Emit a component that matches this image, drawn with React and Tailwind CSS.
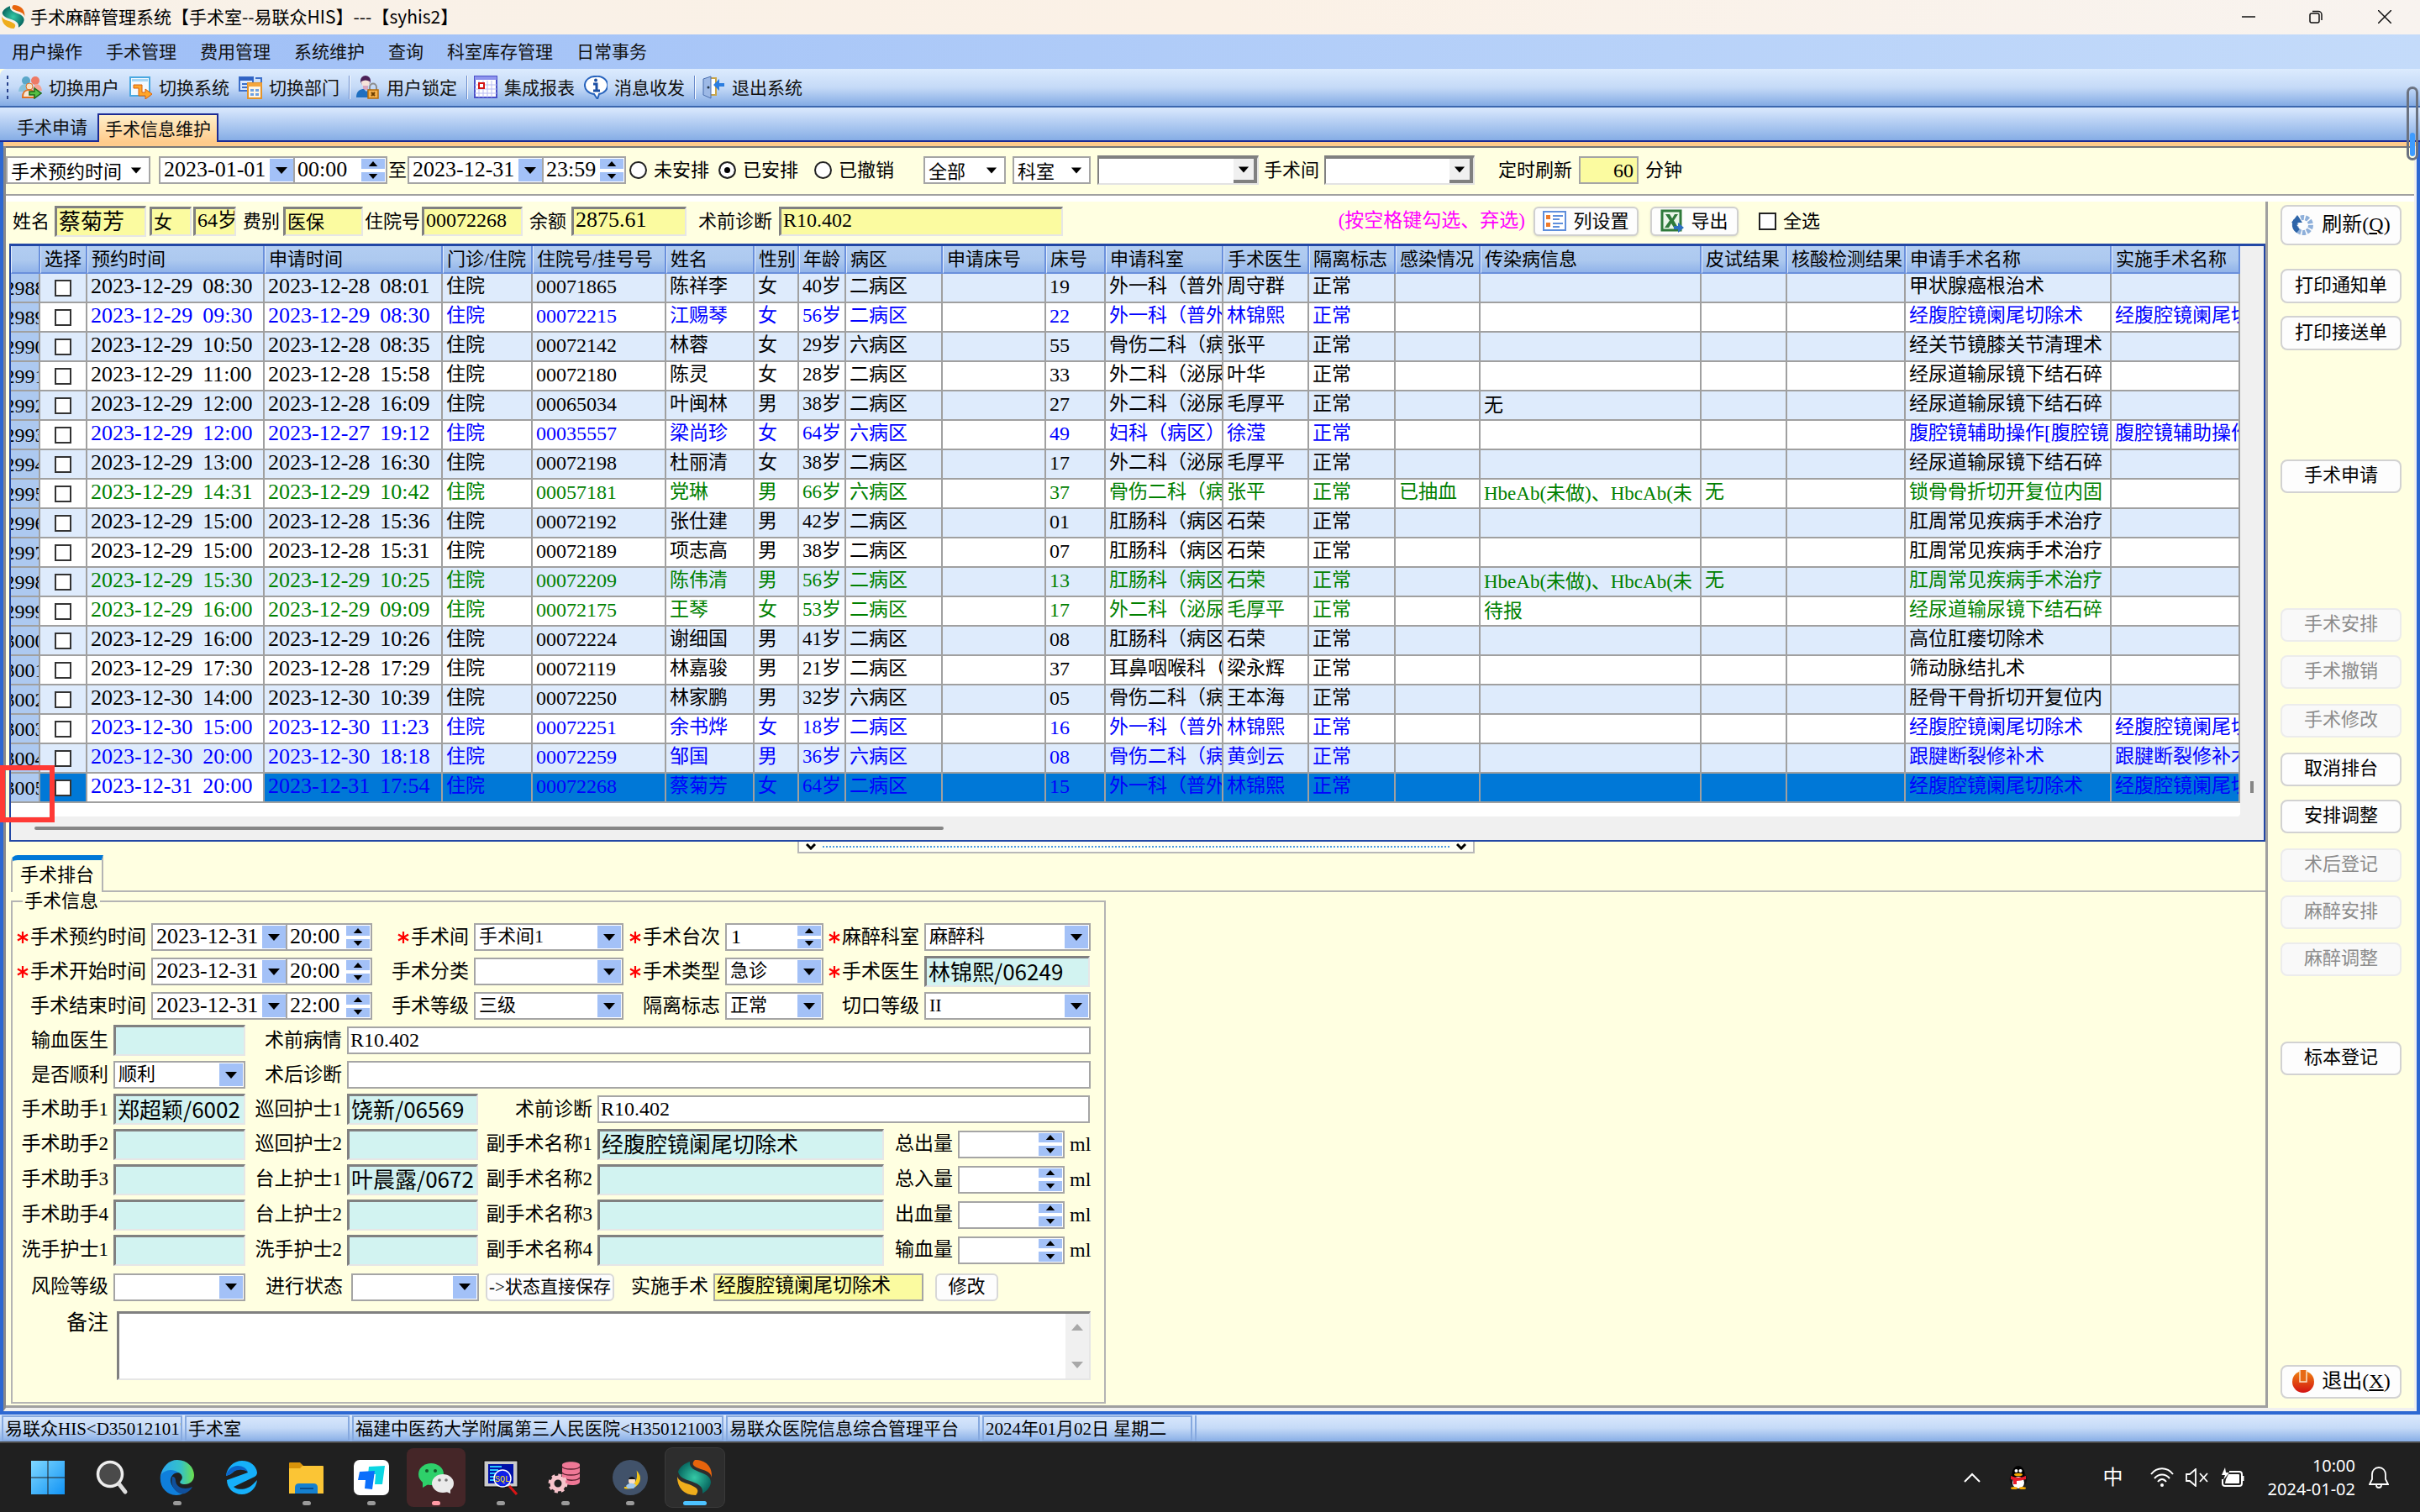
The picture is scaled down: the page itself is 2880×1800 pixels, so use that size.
import React from 'react';

const CJK = "font-['Noto_Sans_CJK_SC',sans-serif]";
const SONG = "font-['Liberation_Serif','Noto_Sans_CJK_SC',serif]";

/* ---------- shared controls ---------- */

function Down({ className = 'w-4 h-2.5' }) {
  return (
    <svg viewBox="0 0 16 10" className={className} aria-hidden="true">
      <path d="M1 1h14L8 9z" fill="currentColor" />
    </svg>
  );
}

function Up({ className = 'w-3 h-2' }) {
  return (
    <svg viewBox="0 0 16 10" className={className} aria-hidden="true">
      <path d="M1 9h14L8 1z" fill="currentColor" />
    </svg>
  );
}

function Spin({ name }) {
  return (
    <span className="flex w-7 shrink-0 flex-col gap-1">
      <button aria-label={name + '增加'} className="flex flex-1 items-center justify-center bg-[#a3c1f7]">
        <Up />
      </button>
      <button aria-label={name + '减少'} className="flex flex-1 items-center justify-center bg-[#a3c1f7]">
        <Down className="w-3 h-2" />
      </button>
    </span>
  );
}

function DateTime({ id, name, date, time, timeWidth }) {
  return (
    <div className="flex h-[33px] shrink-0 border-2 border-[#a5a5a5] bg-white">
      <input id={id} aria-label={name + '日期'} defaultValue={date} className={`w-[130px] pb-0.5 pl-1 text-[26px] ${SONG}`} />
      <button aria-label={name + '日历'} className="my-px flex w-7 items-center justify-center bg-[#a3c1f7]">
        <Down />
      </button>
      <span className={`flex border-l-2 border-[#a5a5a5] p-px ${timeWidth}`}>
        <input aria-label={name + '时间'} defaultValue={time} className={`min-w-0 flex-1 pb-0.5 pl-0.5 text-[26px] ${SONG}`} />
        <Spin name={name} />
      </span>
    </div>
  );
}

function Combo({ id, label, value, width, blue }) {
  return (
    <div className={`relative h-[33px] shrink-0 border-2 border-[#a5a5a5] bg-white ${width}`}>
      <select id={id} aria-label={label} className={`h-full w-full appearance-none pb-0.5 pl-1 text-[22px] leading-7 ${SONG}`}>
        <option>{value}</option>
      </select>
      <span
        className={`pointer-events-none absolute inset-y-px right-px flex w-7 items-center justify-center ${
          blue ? 'bg-[#a3c1f7]' : ''
        }`}
      >
        <Down className={blue ? 'w-4 h-2.5' : 'w-3.5 h-2.5'} />
      </span>
    </div>
  );
}

function SunkenCombo({ id, label, width }) {
  return (
    <div className={`relative h-[35px] shrink-0 border-2 border-t-4 border-[#e3e3e3] border-t-[#808080] border-l-[#808080] bg-white ${width}`}>
      <select id={id} aria-label={label} className="h-full w-full appearance-none">
        <option> </option>
      </select>
      <span className="pointer-events-none absolute inset-y-0 right-0 flex w-7 items-center justify-center border-b-4 border-r-4 border-[#808080] bg-[#f0f0f0]">
        <Down className="w-3.5 h-3" />
      </span>
    </div>
  );
}

function Field({ id, label, value, tone = 'bg-[#d2f3f1]', width, font = CJK, size = 'text-[26px]', height = 'h-[37px]' }) {
  return (
    <input
      id={id}
      aria-label={label}
      defaultValue={value}
      className={`border-2 border-[#e6e6e6] border-t-[3px] border-t-[#808080] border-l-[3px] border-l-[#808080] pb-1 pl-0.5 ${tone} ${width} ${font} ${size} ${height}`}
    />
  );
}

function Flat({ id, value, width, tone = 'bg-white', size = 'text-[24px]' }) {
  return (
    <input id={id} defaultValue={value} className={`h-[33px] border-2 border-[#a5a5a5] pb-0.5 pl-0.5 ${tone} ${width} ${size} ${SONG}`} />
  );
}

function SpinField({ id, name, value, width }) {
  return (
    <div className={`flex h-[33px] shrink-0 border-2 border-[#a5a5a5] bg-white p-px ${width}`}>
      <input id={id} defaultValue={value} className={`min-w-0 flex-1 pb-0.5 pl-1 text-[24px] ${SONG}`} />
      <Spin name={name} />
    </div>
  );
}

function Label({ htmlFor, children, width, star }) {
  return (
    <label htmlFor={htmlFor} className={`flex shrink-0 items-center justify-end gap-0.5 pr-1.5 text-[23px] leading-8 whitespace-nowrap ${width} ${SONG}`}>
      {star && (
        <svg viewBox="0 0 14 16" className="h-4 w-3.5" aria-hidden="true">
          <path d="M7 1v14M1 4.5l12 7M13 4.5l-12 7" stroke="#ff0000" strokeWidth="2.2" />
        </svg>
      )}
      {children}
    </label>
  );
}

/* ---------- icons ---------- */

function Swirl({ className }) {
  return (
    <svg viewBox="0 0 42 42" className={className} aria-hidden="true">
      <defs>
        <radialGradient id="swirlGreen" cx="0.5" cy="0.5" r="0.55">
          <stop offset="0" stopColor="#35c9a6" />
          <stop offset="1" stopColor="#06645e" />
        </radialGradient>
      </defs>
      <path d="M21 0C34 0 42 8 41 21 40 15 35 13 28 11 19 8 16 5 21 0z" fill="#e8640c" />
      <path d="M15 2c-1 8 6 10 13 13 9 3 12 7 12 12-1 6-5 10-10 13 1-8-4-11-12-14C8 23 2 20 1 14 3 8 9 4 15 2z" fill="url(#swirlGreen)" />
      <path d="M0 20c2 5 7 7 14 9 10 4 13 7 8 13C8 42 0 33 0 20z" fill="#efad1c" />
    </svg>
  );
}

const Ico = ({ children }) => (
  <svg viewBox="0 0 28 28" className="h-7 w-7 shrink-0" aria-hidden="true">
    {children}
  </svg>
);

const toolIcons = {
  users: (
    <Ico>
      <circle cx="9" cy="6" r="5" fill="#5ba7c9" />
      <circle cx="20" cy="6" r="5" fill="#ee7a66" />
      <path d="M0 19c1-8 5-9 9-9l4 9z" fill="#86c1db" />
      <path d="M28 18c-1-7-4-8-8-8l-4 8z" fill="#f4a394" />
      <circle cx="13" cy="13" r="4" fill="#fbe2c4" stroke="#e07020" />
      <path d="M5 26c0-8 4-9 8-9s6 3 6 9z" fill="#f6e7d8" stroke="#e07020" strokeWidth="2" />
      <path d="M13 19h6v-4l8 6-8 6v-4h-6z" fill="#57c043" stroke="#1f6b1a" strokeWidth="1.500" />
    </Ico>
  ),
  system: (
    <Ico>
      <path d="M2 2h23v22H2z" fill="#f2f9ff" stroke="#4aa8e0" strokeWidth="2" />
      <path d="M4 4h19v3H4z" fill="#a7d6f5" />
      <path d="M6 11h10v9h4v-4l8 6-8 6v-4h-8v-9H6z" fill="#ffa62b" stroke="#d9600d" />
    </Ico>
  ),
  dept: (
    <Ico>
      <path d="M1 2h16v16H1z" fill="#d9e8ff" stroke="#3c6fc9" strokeWidth="2" />
      <path d="M1 2h16v4H1z" fill="#2f62c4" />
      <path d="M4 10h8M4 14h8" stroke="#3c6fc9" strokeWidth="2" />
      <path d="M20 3h7v5" fill="none" stroke="#3c6fc9" strokeWidth="2" />
      <path d="M11 9h16v18H11z" fill="#fff6e6" stroke="#e2942c" strokeWidth="2" />
      <path d="M11 9h16v4H11z" fill="#f4a63e" />
      <path d="M14 16h4v3h-4zM20 16h4v3h-4zM14 21h4v3h-4zM20 21h4v3h-4z" fill="#6ea2e5" />
    </Ico>
  ),
  lock: (
    <Ico>
      <circle cx="11" cy="6" r="6" fill="#4a1f57" />
      <path d="M6 7q5-3 10 0c0 9-10 9-10 0z" fill="#f7e3da" />
      <path d="M8 12h6v5H8z" fill="#d9a7c0" />
      <path d="M0 26c0-8 5-10 9-10l3 3 3-3c4 0 6 4 6 10z" fill="#1f6fc0" />
      <path d="M16 17v-3c0-6 8-6 8 0v3" fill="none" stroke="#8c8c8c" strokeWidth="2" />
      <path d="M14 17h12v10H14z" fill="#f5b04b" stroke="#b76c0a" strokeWidth="1.500" />
      <path d="M18 20l4 4M22 20l-4 4" stroke="#6b3d00" strokeWidth="2" />
    </Ico>
  ),
  report: (
    <Ico>
      <path d="M1 1h26v25H1z" fill="#fff" stroke="#4a50c8" strokeWidth="2" />
      <path d="M1 1h26v4H1z" fill="#8d93ee" />
      <path d="M6 6v20M11 6v20M16 6v20M21 6v20M1 11h26M1 16h26M1 21h26" stroke="#b9bcf3" />
      <path d="M6 9h6v6H6z" fill="#fff" stroke="#d41414" strokeWidth="2" />
    </Ico>
  ),
  message: (
    <Ico>
      <path d="M14 1a12 10.500 0 0 1 4 21l-2 6-4-6A12 10.500 0 0 1 14 1z" fill="#fff" stroke="#2763bd" strokeWidth="2" />
      <path d="M11 10h4v8M11 18h8" fill="none" stroke="#1c4fa3" strokeWidth="3" />
      <circle cx="14" cy="5.500" r="2" fill="#1c4fa3" />
    </Ico>
  ),
  exit: (
    <Ico>
      <path d="M9 3h8v20H9z" fill="#fff" stroke="#c9a54a" strokeWidth="2" />
      <path d="M2 4l9-3v26l-9-4z" fill="#9db9e6" stroke="#4b6fae" />
      <circle cx="8" cy="14" r="1.500" fill="#234" />
      <path d="M27 9h-6V4l-7 7 7 7v-5h6z" fill="#2b7de0" />
    </Ico>
  ),
};

/* ---------- data ---------- */

const columns = [
  ['', 'w-[35px]'],
  ['选择', 'w-[56px]'],
  ['预约时间', 'w-[211px]'],
  ['申请时间', 'w-[212px]'],
  ['门诊/住院', 'w-[107px]'],
  ['住院号/挂号号', 'w-[159px]'],
  ['姓名', 'w-[105px]'],
  ['性别', 'w-[53px]'],
  ['年龄', 'w-[56px]'],
  ['病区', 'w-[115px]'],
  ['申请床号', 'w-[123px]'],
  ['床号', 'w-[71px]'],
  ['申请科室', 'w-[140px]'],
  ['手术医生', 'w-[102px]'],
  ['隔离标志', 'w-[103px]'],
  ['感染情况', 'w-[101px]'],
  ['传染病信息', 'w-[263px]'],
  ['皮试结果', 'w-[102px]'],
  ['核酸检测结果', 'w-[141px]'],
  ['申请手术名称', 'w-[245px]'],
  ['实施手术名称', ''],
];

const HB = 'HbeAb(未做)、HbcAb(未';
const LWCQ = '经腹腔镜阑尾切除术';
const JND = '经尿道输尿镜下结石碎';

// color, 预约, 申请, 住院号, 姓名, 性别, 年龄, 病区, 床号, 科室, 医生, 感染, 传染病, 皮试, 申请手术, 实施手术
const rows = [
  ['k', '29 08:30', '28 08:01', '00071865', '陈祥李', '女', 40, '二', '19', '外一科（普外', '周守群', '', '', '', '甲状腺癌根治术', ''],
  ['b', '29 09:30', '29 08:30', '00072215', '江赐琴', '女', 56, '二', '22', '外一科（普外', '林锦熙', '', '', '', LWCQ, LWCQ],
  ['k', '29 10:50', '28 08:35', '00072142', '林蓉', '女', 29, '六', '55', '骨伤二科（病', '张平', '', '', '', '经关节镜膝关节清理术', ''],
  ['k', '29 11:00', '28 15:58', '00072180', '陈灵', '女', 28, '二', '33', '外二科（泌尿', '叶华', '', '', '', JND, ''],
  ['k', '29 12:00', '28 16:09', '00065034', '叶闽林', '男', 38, '二', '27', '外二科（泌尿', '毛厚平', '', '无', '', JND, ''],
  ['b', '29 12:00', '27 19:12', '00035557', '梁尚珍', '女', 64, '六', '49', '妇科（病区）', '徐滢', '', '', '', '腹腔镜辅助操作[腹腔镜', '腹腔镜辅助操作'],
  ['k', '29 13:00', '28 16:30', '00072198', '杜丽清', '女', 38, '二', '17', '外二科（泌尿', '毛厚平', '', '', '', JND, ''],
  ['g', '29 14:31', '29 10:42', '00057181', '党琳', '男', 66, '六', '37', '骨伤二科（病', '张平', '已抽血', HB, '无', '锁骨骨折切开复位内固', ''],
  ['k', '29 15:00', '28 15:36', '00072192', '张仕建', '男', 42, '二', '01', '肛肠科（病区', '石荣', '', '', '', '肛周常见疾病手术治疗', ''],
  ['k', '29 15:00', '28 15:31', '00072189', '项志高', '男', 38, '二', '07', '肛肠科（病区', '石荣', '', '', '', '肛周常见疾病手术治疗', ''],
  ['g', '29 15:30', '29 10:25', '00072209', '陈伟清', '男', 56, '二', '13', '肛肠科（病区', '石荣', '', HB, '无', '肛周常见疾病手术治疗', ''],
  ['g', '29 16:00', '29 09:09', '00072175', '王琴', '女', 53, '二', '17', '外二科（泌尿', '毛厚平', '', '待报', '', JND, ''],
  ['k', '29 16:00', '29 10:26', '00072224', '谢细国', '男', 41, '二', '08', '肛肠科（病区', '石荣', '', '', '', '高位肛瘘切除术', ''],
  ['k', '29 17:30', '28 17:29', '00072119', '林嘉骏', '男', 21, '二', '37', '耳鼻咽喉科（', '梁永辉', '', '', '', '筛动脉结扎术', ''],
  ['k', '30 14:00', '30 10:39', '00072250', '林家鹏', '男', 32, '六', '05', '骨伤二科（病', '王本海', '', '', '', '胫骨干骨折切开复位内', ''],
  ['b', '30 15:00', '30 11:23', '00072251', '余书烨', '女', 18, '二', '16', '外一科（普外', '林锦熙', '', '', '', LWCQ, LWCQ],
  ['b', '30 20:00', '30 18:18', '00072259', '邹国', '男', 36, '六', '08', '骨伤二科（病', '黄剑云', '', '', '', '跟腱断裂修补术', '跟腱断裂修补术'],
  ['b', '31 20:00', '31 17:54', '00072268', '蔡菊芳', '女', 64, '二', '15', '外一科（普外', '林锦熙', '', '', '', LWCQ, LWCQ],
];

const inkClass = { k: 'text-black', b: 'text-[#0000ff]', g: 'text-[#008000]' };

function Stamp({ value }) {
  const [day, time] = value.split(' ');
  return (
    <span className="flex gap-3 text-[26px]">
      <span>2023-12-{day}</span>
      <span>{time}</span>
    </span>
  );
}

function Cell({ children, className = '' }) {
  return (
    <td className={`h-[35px] overflow-hidden border-r-2 border-b-2 border-[#a0a0a0] p-0 pl-1 leading-[30px] whitespace-nowrap ${className}`}>
      <div className="h-[33px] overflow-hidden">{children}</div>
    </td>
  );
}

function SurgeryTable() {
  return (
    <div className="ml-1 border-2 border-t-[3px] border-[#2247a5] bg-[#f0f0f0]">
      <div className="flex">
        <div className="min-w-0 flex-1 rounded-br-sm bg-white pb-4">
          <table className={`w-full table-fixed border-separate border-spacing-0 text-[23px] ${SONG}`}>
            <colgroup>
              {columns.map(([name, width], i) => (
                <col key={i} className={width} />
              ))}
            </colgroup>
            <thead>
              <tr className="bg-linear-to-b from-[#b2cdf2] via-[#adc9ef] to-[#8db0e8]">
                {columns.map(([name], i) => (
                  <th
                    key={i}
                    className="h-[33px] overflow-hidden border-r-2 border-b-2 border-l border-[#6a90dc] border-l-[#e4eefc] p-0 pl-1 text-left text-[22px] leading-7 font-normal whitespace-nowrap"
                  >
                    <div className="h-7 overflow-hidden">{name}</div>
                  </th>
                ))}
              </tr>
            </thead>
            <tbody>
              {rows.map((r, i) => {
                const sel = i === rows.length - 1;
                const [ink, plan, apply, no, name, sex, age, ward, bed, dept, doc, inf, dis, skin, op, done] = r;
                return (
                  <tr key={i} className={`${inkClass[ink]} ${sel ? 'bg-[#0078d7]' : i % 2 ? 'bg-white' : 'bg-[#deebfc]'}`}>
                    <td className="h-[35px] border-r-2 border-b-2 border-[#a0a0a0] bg-[#adc9f0] p-0 text-black">
                      <div className="flex h-[33px] items-center justify-center overflow-hidden text-[24px]">{2988 + i}</div>
                    </td>
                    <td className="border-r-2 border-b-2 border-[#a0a0a0] p-0">
                      <div className="flex items-center justify-center">
                        <input type="checkbox" aria-label={'选择 ' + name} className="h-5 w-5 appearance-none border-2 border-[#333] bg-white" />
                      </div>
                    </td>
                    <Cell className={sel ? 'bg-white' : ''}><Stamp value={plan} /></Cell>
                    <Cell><Stamp value={apply} /></Cell>
                    <Cell>住院</Cell>
                    <Cell className="text-[24px]">{no}</Cell>
                    <Cell>{name}</Cell>
                    <Cell>{sex}</Cell>
                    <Cell>{age}岁</Cell>
                    <Cell>{ward}病区</Cell>
                    <Cell />
                    <Cell className="text-[24px]">{bed}</Cell>
                    <Cell>{dept}</Cell>
                    <Cell>{doc}</Cell>
                    <Cell>正常</Cell>
                    <Cell>{inf}</Cell>
                    <Cell>{dis && <div className="pt-0.5">{dis}</div>}</Cell>
                    <Cell>{skin}</Cell>
                    <Cell />
                    <Cell>{op}</Cell>
                    <Cell>{done}</Cell>
                  </tr>
                );
              })}
            </tbody>
          </table>
        </div>
        <div className="flex w-7 items-end justify-center pb-7">
          <div className="h-3.5 w-1 bg-[#868686]" />
        </div>
      </div>
      <div className="flex h-7 items-center pl-7">
        <div className="h-1 w-[1082px] rounded-sm bg-[#868686]" />
      </div>
    </div>
  );
}

/* ---------- page sections ---------- */

function TitleBar() {
  return (
    <header className={`flex h-[41px] items-center bg-linear-to-r from-[#f8f1e8] via-[#fbf1e6] to-[#f8f3ef] pb-0.5 pl-0.5 text-[21px] text-black ${CJK}`}>
      <Swirl className="h-7 w-7" />
      <h1 className="ml-1.5">手术麻醉管理系统【手术室--易联众HIS】---【syhis2】</h1>
      <div className="ml-auto flex">
        <button aria-label="最小化" className="flex w-20 justify-center">
          <svg viewBox="0 0 16 16" className="h-4 w-4"><path d="M0 8h16" stroke="#111" strokeWidth="1.500" /></svg>
        </button>
        <button aria-label="还原" className="flex w-20 justify-center">
          <svg viewBox="0 0 16 16" className="h-4 w-4" fill="none" stroke="#111" strokeWidth="1.500">
            <rect x="1" y="4" width="11" height="11" rx="2" />
            <path d="M4 1.500h7a4 4 0 0 1 4 4V12" />
          </svg>
        </button>
        <button aria-label="关闭" className="flex w-[84px] justify-center">
          <svg viewBox="0 0 16 16" className="h-4 w-4"><path d="M0 0l16 16M16 0L0 16" stroke="#111" strokeWidth="1.500" /></svg>
        </button>
      </div>
    </header>
  );
}

function MenuBar() {
  return (
    <nav className={`flex h-[41px] items-center gap-7 bg-linear-to-r from-[#9ebef6] to-[#c4dbfa] pb-0.5 pl-3.5 text-[21px] text-[#111] ${CJK}`}>
      {['用户操作', '手术管理', '费用管理', '系统维护', '查询', '科室库存管理', '日常事务'].map((m) => (
        <button key={m}>{m}</button>
      ))}
    </nav>
  );
}

function ToolBar() {
  const items = [
    ['users', '切换用户'],
    ['system', '切换系统'],
    ['dept', '切换部门', true],
    ['lock', '用户锁定', true],
    ['report', '集成报表'],
    ['message', '消息收发', true],
    ['exit', '退出系统'],
  ];
  return (
    <div className={`flex h-[46px] items-center rounded-tl-lg border-b-2 border-[#3c67ae] bg-linear-to-b from-[#dcebfe] via-[#c5daf7] to-[#84abe4] pl-2 text-[21px] text-[#111] ${CJK}`}>
      <span className="mr-3 h-7 w-0.5 bg-[repeating-linear-gradient(#27418b_0_4px,transparent_4px_8px)]" />
      {items.map(([icon, text, sep]) => (
        <React.Fragment key={icon}>
          <button className="mr-[11px] flex items-center gap-2">
            {toolIcons[icon]}
            {text}
          </button>
          {sep && <span className="mr-[7px] h-7 w-0.5 border-r border-white bg-[#6a8ccb]" />}
        </React.Fragment>
      ))}
    </div>
  );
}

function TabStrip() {
  return (
    <div className={`flex h-[41px] items-end border-b-2 border-[#1c2a94] bg-linear-to-b from-[#dbe9fd] to-[#86ade5] pl-4 text-[21px] text-[#111] ${CJK}`}>
      <button className="mr-2 h-8 w-[92px]">手术申请</button>
      <button className="-mb-0.5 h-[34px] w-36 border-2 border-b-0 border-[#1c2a94] bg-linear-to-b from-[#ffefc9] to-[#ffcb8b] pb-1">手术信息维护</button>
    </div>
  );
}

function Radio({ id, text, checked }) {
  return (
    <span className="flex items-center gap-2">
      <input
        id={id}
        type="radio"
        name="state"
        defaultChecked={checked}
        className="h-[21px] w-[21px] appearance-none rounded-full border-2 border-[#222] bg-white checked:bg-black checked:shadow-[inset_0_0_0_5px_#fff]"
      />
      <label htmlFor={id} className="w-[69px] whitespace-nowrap">{text}</label>
    </span>
  );
}

function FilterRow() {
  return (
    <div className={`flex h-[57px] items-center border-b-2 border-[#a0a0a0] pb-0.5 text-[22px] whitespace-nowrap ${SONG}`}>
      <Combo label="时间类型" value="手术预约时间" width="w-[172px]" />
      <span className="w-2.5" />
      <DateTime name="开始" date="2023-01-01" time="00:00" timeWidth="w-[110px]" />
      <span className="w-6 text-center">至</span>
      <DateTime name="结束" date="2023-12-31" time="23:59" timeWidth="w-[98px]" />
      <div className="ml-1 flex gap-2">
        <Radio id="st0" text="未安排" />
        <Radio id="st1" text="已安排" checked />
        <span />
        <Radio id="st2" text="已撤销" />
      </div>
      <div className="ml-8 flex items-center gap-2">
        <Combo label="范围" value="全部" width="w-[98px]" />
        <Combo label="科室类型" value="科室" width="w-[93px]" />
        <SunkenCombo label="科室" width="w-[192px]" />
      </div>
      <label htmlFor="room" className="mx-1.5">手术间</label>
      <SunkenCombo id="room" width="w-[179px]" />
      <label htmlFor="refresh" className="mr-2 ml-7">定时刷新</label>
      <input
        id="refresh"
        defaultValue="60"
        className="h-[33px] w-[71px] border-2 border-[#a5a5a5] bg-[#fbfba0] pr-1 text-right text-[24px]"
      />
      <span className="ml-2">分钟</span>
    </div>
  );
}

function InfoRow() {
  const yellow = 'bg-[#fbfba0]';
  const small = { tone: yellow, font: SONG, height: 'h-[35px]' };
  return (
    <div className={`flex h-[50px] items-center pb-1 text-[22px] whitespace-nowrap ${SONG}`}>
      <label htmlFor="pname" className="w-[58px] pl-2">姓名</label>
      <Field id="pname" value="蔡菊芳" tone={yellow} width="w-[109px]" />
      <span className="ml-1 flex gap-0.5">
        <Field label="性别" value="女" {...small} size="text-[22px]" width="w-[50px]" />
        <Field label="年龄" value="64岁" {...small} size="text-[24px]" width="w-[51px]" />
      </span>
      <label htmlFor="fee" className="mr-1 ml-2">费别</label>
      <Field id="fee" value="医保" {...small} size="text-[22px]" width="w-[95px]" />
      <label htmlFor="pno" className="mx-0.5">住院号</label>
      <Field id="pno" value="00072268" {...small} size="text-[24px]" width="w-[120px]" />
      <label htmlFor="bal" className="mr-1.5 ml-2">余额</label>
      <Field id="bal" value="2875.61" {...small} size="text-[26px]" width="w-[137px]" />
      <label htmlFor="diag" className="mr-2 ml-3.5">术前诊断</label>
      <Field id="diag" value="R10.402" {...small} size="text-[24px]" width="w-[338px]" />
      <div className="mr-[530px] ml-auto flex items-center">
        <span className="mr-2.5 text-[23px] text-[#ff00ff]">(按空格键勾选、弃选)</span>
        <button className="flex h-[35px] w-[125px] items-center justify-center gap-2 rounded-md border-2 border-[#d0d0d0] bg-[#fdfdfd] shadow-sm">
          <Ico>
            <path d="M1 3h26v22H1z" fill="#fff" stroke="#5f8fdc" strokeWidth="2" />
            <path d="M4 7h5v5H4zM4 16h5v5H4z" fill="#ee7a2a" />
            <path d="M12 8h12M12 12h8M12 17h12M12 21h8" stroke="#5f8fdc" strokeWidth="2" />
          </Ico>
          列设置
        </button>
        <button className="ml-3.5 flex h-[35px] w-[105px] items-center justify-center gap-2 rounded-md border-2 border-[#d0d0d0] bg-[#fdfdfd] shadow-sm">
          <Ico>
            <path d="M2 2h22v23H2z" fill="#eaf6ea" stroke="#2f7a3b" strokeWidth="3" />
            <path d="M6 6h5l3 5 3-5h4l-5 7.500 5 8.500h-5l-3-5-3 5H5l6-8.500z" fill="#2f7a3b" />
            <path d="M16 20h5v-4l7 6-7 6v-4h-5z" fill="#2c6fc0" />
          </Ico>
          导出
        </button>
        <span className="ml-6 flex items-center gap-2">
          <input id="all" type="checkbox" className="h-[21px] w-[21px] appearance-none border-2 border-[#222] bg-white" />
          <label htmlFor="all">全选</label>
        </span>
      </div>
    </div>
  );
}

function Line({ children, h = 'h-[41px]' }) {
  return <div className={`flex items-center ${h}`}>{children}</div>;
}

function Form() {
  return (
    <fieldset className="relative mt-2.5 ml-1.5 w-[1303px] border-2 border-[#b4b4b4] pt-[21px] pb-[26px]">
      <legend className={`absolute -top-[17px] left-3 bg-[#ffffe1] px-0.5 text-[22px] leading-8 ${SONG}`}>手术信息</legend>

      <Line>
        <Label htmlFor="t1" width="w-[165px]" star>手术预约时间</Label>
        <DateTime id="t1" name="预约" date="2023-12-31" time="20:00" timeWidth="w-[101px]" />
        <Label htmlFor="f1" width="w-[121px]" star>手术间</Label>
        <Combo id="f1" value="手术间1" width="w-[178px]" blue />
        <Label htmlFor="f2" width="w-[121px]" star>手术台次</Label>
        <SpinField id="f2" name="台次" value="1" width="w-[117px]" />
        <Label htmlFor="f3" width="w-[120px]" star>麻醉科室</Label>
        <Combo id="f3" value="麻醉科" width="w-[198px]" blue />
      </Line>
      <Line>
        <Label htmlFor="t2" width="w-[165px]" star>手术开始时间</Label>
        <DateTime id="t2" name="开始手术" date="2023-12-31" time="20:00" timeWidth="w-[101px]" />
        <Label htmlFor="f4" width="w-[121px]">手术分类</Label>
        <Combo id="f4" value="" width="w-[178px]" blue />
        <Label htmlFor="f5" width="w-[121px]" star>手术类型</Label>
        <Combo id="f5" value="急诊" width="w-[117px]" blue />
        <Label htmlFor="f6" width="w-[120px]" star>手术医生</Label>
        <Field id="f6" value="林锦熙/06249" width="w-[197px]" />
      </Line>
      <Line>
        <Label htmlFor="t3" width="w-[165px]">手术结束时间</Label>
        <DateTime id="t3" name="结束手术" date="2023-12-31" time="22:00" timeWidth="w-[101px]" />
        <Label htmlFor="f7" width="w-[121px]">手术等级</Label>
        <Combo id="f7" value="三级" width="w-[178px]" blue />
        <Label htmlFor="f8" width="w-[121px]">隔离标志</Label>
        <Combo id="f8" value="正常" width="w-[117px]" blue />
        <Label htmlFor="f9" width="w-[120px]">切口等级</Label>
        <Combo id="f9" value="II" width="w-[198px]" blue />
      </Line>
      <Line>
        <Label htmlFor="g1" width="w-[120px]">输血医生</Label>
        <Field id="g1" value="" width="w-[157px]" />
        <Label htmlFor="g2" width="w-[121px]">术前病情</Label>
        <Flat id="g2" value="R10.402" width="w-[885px]" />
      </Line>
      <Line>
        <Label htmlFor="g3" width="w-[120px]">是否顺利</Label>
        <Combo id="g3" value="顺利" width="w-[157px]" blue />
        <Label htmlFor="g4" width="w-[121px]">术后诊断</Label>
        <Flat id="g4" value="" width="w-[885px]" />
      </Line>
      <Line>
        <Label htmlFor="h1" width="w-[120px]">手术助手1</Label>
        <Field id="h1" value="郑超颖/6002" width="w-[157px]" />
        <Label htmlFor="h2" width="w-[121px]">巡回护士1</Label>
        <Field id="h2" value="饶新/06569" width="w-[156px]" />
        <Label htmlFor="h3" width="w-[142px]">术前诊断</Label>
        <Flat id="h3" value="R10.402" width="w-[586px]" />
      </Line>
      {[
        ['手术助手2', '巡回护士2', '', '副手术名称1', LWCQ, '总出量'],
        ['手术助手3', '台上护士1', '叶晨露/0672', '副手术名称2', '', '总入量'],
        ['手术助手4', '台上护士2', '', '副手术名称3', '', '出血量'],
        ['洗手护士1', '洗手护士2', '', '副手术名称4', '', '输血量'],
      ].map(([a, b, bv, c, cv, d]) => (
        <Line key={a} h="h-[42px]">
          <Label htmlFor={'x' + a} width="w-[120px]">{a}</Label>
          <Field id={'x' + a} value="" width="w-[157px]" />
          <Label htmlFor={'x' + b} width="w-[121px]">{b}</Label>
          <Field id={'x' + b} value={bv} width="w-[156px]" />
          <Label htmlFor={'x' + c} width="w-[142px]">{c}</Label>
          <Field id={'x' + c} value={cv} width="w-[341px]" />
          <Label htmlFor={'x' + d} width="w-[88px]">{d}</Label>
          <SpinField id={'x' + d} name={d} value="" width="w-[127px]" />
          <span className={`ml-1.5 text-[24px] ${SONG}`}>ml</span>
        </Line>
      ))}
      <Line h="h-[46px]">
        <Label htmlFor="k1" width="w-[120px]">风险等级</Label>
        <Combo id="k1" value="" width="w-[157px]" blue />
        <Label htmlFor="k2" width="w-[126px]"><span className="pr-1">进行状态</span></Label>
        <Combo id="k2" value="" width="w-[152px]" blue />
        <button className={`ml-2 h-[33px] w-[153px] rounded-md border-2 border-[#d8d8d8] bg-[#fdfdfd] text-[21px] leading-7 whitespace-nowrap ${SONG}`}>-&gt;状态直接保存</button>
        <Label htmlFor="k3" width="w-[118px]">实施手术</Label>
        <Flat id="k3" value={LWCQ} tone="bg-[#fbfba0]" size="text-[23px]" width="w-[250px]" />
        <button className={`ml-3.5 h-[33px] w-[75px] rounded-md border-2 border-[#d8d8d8] bg-[#fdfdfd] text-[22px] leading-7 ${SONG}`}>修改</button>
      </Line>
      <div className="mt-1.5 flex">
        <label htmlFor="memo" className={`w-[124px] pr-2.5 text-right text-[25px] leading-7 ${SONG}`}>备注</label>
        <div className="flex h-[82px] w-[1159px] border-2 border-[#e6e6e6] border-t-[3px] border-t-[#808080] border-l-[3px] border-l-[#808080] bg-white">
          <textarea id="memo" className="flex-1 resize-none" />
          <div className="flex w-7 flex-col items-center justify-between bg-[#f0f0f0] py-2.5 text-[#a8a8a8]">
            <Up className="h-3 w-4" />
            <Down className="h-3 w-4" />
          </div>
        </div>
      </div>
    </fieldset>
  );
}

function SideButton({ text, off, className, big, children }) {
  return (
    <button
      disabled={off}
      className={`flex w-36 shrink-0 items-center justify-center gap-2 rounded-lg border-2 pb-0.5 leading-7 whitespace-nowrap ${SONG} ${
        big ? 'text-[24px]' : 'text-[22px]'
      } ${off ? 'border-[#ececec] bg-[#f9f9f9] text-[#8b8b8b]' : 'border-[#d2d2d2] bg-[#fdfdfd] text-black'} ${className}`}
    >
      {children}
      {text}
    </button>
  );
}

function SidePanel() {
  return (
    <aside className="flex w-[174px] shrink-0 flex-col items-center pt-1 pb-[11px]">
      <SideButton big className="h-12">
        <svg viewBox="0 0 28 28" className="h-7 w-7" fill="none" aria-hidden="true">
          <circle cx="14" cy="15" r="9" stroke="#8fb0da" strokeWidth="6" strokeDasharray="4 1.600" />
          <path d="M8 22C3 18 3 13 5 10" stroke="#2d64a8" strokeWidth="6" />
          <path d="M0 12L7 3l6 9z" fill="#2d64a8" />
        </svg>
        <span>刷新(<u>Q</u>)</span>
      </SideButton>
      <SideButton text="打印通知单" className="mt-7 h-[41px]" />
      <SideButton text="打印接送单" className="mt-[15px] h-[41px]" />
      <SideButton text="手术申请" className="mt-[130px] h-10" />
      <SideButton text="手术安排" off className="mt-[137px] h-10" />
      <SideButton text="手术撤销" off className="mt-4 h-10" />
      <SideButton text="手术修改" off className="mt-[18px] h-10" />
      <SideButton text="取消排台" className="mt-[18px] h-10" />
      <SideButton text="安排调整" className="mt-4 h-10" />
      <SideButton text="术后登记" off className="mt-[18px] h-10" />
      <SideButton text="麻醉安排" off className="mt-4 h-10" />
      <SideButton text="麻醉调整" off className="mt-4 h-10" />
      <SideButton text="标本登记" className="mt-[78px] h-10" />
      <SideButton big className="mt-auto h-10">
        <svg viewBox="0 0 28 28" className="h-7 w-7" aria-hidden="true">
          <defs>
            <linearGradient id="power" x2="0" y2="1">
              <stop offset="0" stopColor="#ef8410" />
              <stop offset="1" stopColor="#d31212" />
            </linearGradient>
          </defs>
          <circle cx="14" cy="15" r="13" fill="url(#power)" />
          <path d="M10 1v14h8V1" fill="#e76a14" stroke="#fbe3c8" strokeWidth="1.500" />
        </svg>
        <span>退出(<u>X</u>)</span>
      </SideButton>
    </aside>
  );
}

function StatusBar() {
  const cells = [
    ['易联众HIS<D350121017', 'w-[215px]'],
    ['手术室', 'w-[196px]'],
    ['福建中医药大学附属第三人民医院<H350121003', 'w-[442px]'],
    ['易联众医院信息综合管理平台', 'w-[302px]'],
    ['2024年01月02日 星期二', 'w-[250px]'],
  ];
  return (
    <footer className={`flex h-[34px] gap-[3px] border-b-2 border-[#4a4a4a] bg-linear-to-b from-[#dbe9fd] via-[#c5daf7] to-[#88aee6] pt-px pl-0.5 text-[21px] leading-7 whitespace-nowrap ${SONG}`}>
      {cells.map(([text, width]) => (
        <div key={text} className={`shrink-0 overflow-hidden border-2 border-[#86a9df] pl-0.5 ${width}`}>{text}</div>
      ))}
      <div className="flex-1 border-l-2 border-[#86a9df]" />
    </footer>
  );
}

const AppIco = ({ children }) => (
  <svg viewBox="0 0 42 42" className="h-[42px] w-[42px]" aria-hidden="true">{children}</svg>
);

const apps = [
  ['开始', '', <AppIco key="w"><defs><linearGradient id="win" x2="1" y2="1"><stop offset="0" stopColor="#7fd8ff" /><stop offset="1" stopColor="#1193f5" /></linearGradient></defs><path d="M1 1h19.500v19.500H1zM21.500 1H41v19.500H21.500zM1 21.500h19.500V41H1zM21.500 21.500H41V41H21.500z" fill="url(#win)" /></AppIco>],
  ['搜索', '', <AppIco key="s"><circle cx="18" cy="17" r="14.500" fill="#4a4a4a" stroke="#eee" strokeWidth="3.500" /><path d="M29 29l7 9" stroke="#ddd" strokeWidth="5" strokeLinecap="round" /></AppIco>],
  ['Edge', 'dot', <AppIco key="e"><defs><linearGradient id="edgeTop" x2="1"><stop offset="0" stopColor="#2aa6f2" /><stop offset="0.600" stopColor="#35c1c8" /><stop offset="1" stopColor="#6be04c" /></linearGradient></defs><path d="M1 18C7 9 18 8 23 15c-8 0-12 7-9 14 3 6 8 11 14 11-3 1-5 2-8 2C8 42-1 32 1 18z" fill="#0f7fdb" /><path d="M1 19C3 8 11 0 21 0c12 0 20 9 20 18 0 7-5 11-11 11-5 0-7-2-5-4 4-4 1-9-3-10-8-6-18-2-21 4z" fill="url(#edgeTop)" /><path d="M15 20c-3 11 5 22 15 20 4-2 7-4 9-8-8 4-19 2-20-7 0-3-1-5-4-5z" fill="#10509c" /></AppIco>],
  ['浏览器', '', <AppIco key="b"><path d="M2 19C3 9 11 1 21 1c10 0 17 6 18 14 0 3-2 5-5 6L11 32c6 5 17 3 23-3l5-5c-1 10-9 17-18 17C10 41 3 33 3 24l25-9c-3-6-13-5-17-1-2 2-5 4-9 5z" fill="#16b0fa" /><path d="M2 19c1-7 7-12 14-12 6 0 10 3 12 7-6-3-12-3-17 0-2 2-5 4-9 5z" fill="#0a63c9" /></AppIco>],
  ['文件', 'dot', <AppIco key="f"><path d="M0 4q0-1 1-1h12l4 4v7H0z" fill="#d9940a" /><path d="M0 10h13l3-3h24q1 0 1 1v32H0z" fill="#fbc535" /><path d="M7 40V33q0-5 5-5h17q5 0 5 5v7z" fill="#1580cf" /><path d="M13 34h16" stroke="#0a4d8c" strokeWidth="2" /></AppIco>],
  ['协作', 'dot', <AppIco key="t"><rect width="42" height="42" rx="7" fill="#fff" /><path d="M18 8l19-1-3 22h-9l1-12h-9z" fill="#0bd6e2" /><path d="M7 14l18-1-3 22-9-1 1-10H5z" fill="#0b6ffb" /></AppIco>],
  ['微信', 'alert', <AppIco key="x"><ellipse cx="15" cy="17" rx="15" ry="13" fill="#2ed06a" /><path d="M5 25v8l8-5z" fill="#2ed06a" /><circle cx="10" cy="13" r="2" fill="#145c2a" /><circle cx="20" cy="13" r="2" fill="#145c2a" /><ellipse cx="29" cy="28" rx="13" ry="11" fill="#eaeaea" /><path d="M38 34v6l-7-3z" fill="#eaeaea" /><circle cx="25" cy="24" r="1.800" fill="#777" /><circle cx="33" cy="24" r="1.800" fill="#777" /></AppIco>],
  ['PLSQL', 'dot', <AppIco key="p"><path d="M1 1h40v31H1z" fill="#c9c9c9" stroke="#000" /><path d="M6 5h30v23H6z" fill="#0010a8" /><path d="M8 8h14M8 12h10M8 16h8M8 20h8M8 24h12" stroke="#29c5ff" strokeWidth="2" /><circle cx="23" cy="22" r="10" fill="#1020e8" stroke="#fff" strokeWidth="1.500" /><text x="14" y="26" fontSize="10" fill="#ffe600" fontFamily="Liberation Mono">SQL</text><path d="M31 31l9 10" stroke="#d81414" strokeWidth="3" /></AppIco>],
  ['数据库', 'dot', <AppIco key="d"><path d="M17 6c0-5 21-5 21 0v20c0 4-10 5-16 3l-5-8z" fill="#ef7896" /><path d="M17 8c2 4 19 4 21 0M17 15c2 4 19 4 21 0M20 22c4 3 16 3 18-1" fill="none" stroke="#5a1f2f" strokeWidth="1.500" /><circle cx="12" cy="28" r="7" fill="none" stroke="#f7c3cb" strokeWidth="5" /><circle cx="12" cy="28" r="10" fill="none" stroke="#f7c3cb" strokeWidth="3" strokeDasharray="4 3.850" /></AppIco>],
  ['月亮', 'dot', <AppIco key="m"><circle cx="21" cy="21" r="21" fill="#41526a" /><path d="M30 16c6 8-2 20-16 17 10 1 17-6 16-17z" fill="#f5c518" stroke="#f5c518" strokeWidth="2" /><circle cx="23" cy="25" r="4" fill="#fbe0c4" /><path d="M16 31c3-4 8-4 12-1l-3 4h-7z" fill="#9fc8ee" /><path d="M19 23c1-4 7-4 8 0z" fill="#141414" /></AppIco>],
  ['手术麻醉管理系统', 'active', <Swirl key="a" className="h-[42px] w-[42px]" />],
];

function TaskBar() {
  return (
    <div className="flex h-[82px] items-center bg-[#202020] pl-[22px] text-white">
      <div className="flex gap-[7px]">
        {apps.map(([name, state, icon]) => (
          <button
            key={name}
            aria-label={name}
            className={`flex h-[70px] w-[70px] flex-col items-center gap-[7px] rounded-lg pt-3.5 ${
              state === 'alert' ? 'bg-[#452628]' : state === 'active' ? 'bg-[#2d2d2d] ring-1 ring-[#3a3a3a]' : ''
            }`}
          >
            {icon}
            <span
              className={`h-[5px] rounded-full ${
                state === 'active' ? 'w-7 bg-[#4cc2ff]' : state === 'alert' ? 'w-2.5 bg-[#ff99a4]' : state ? 'w-2.5 bg-[#9a9a9a]' : ''
              }`}
            />
          </button>
        ))}
      </div>
      <div className="mr-[37px] ml-auto flex items-center">
        <button aria-label="展开">
          <svg viewBox="0 0 20 12" className="h-3 w-5"><path d="M1 11l9-9 9 9" fill="none" stroke="#fff" strokeWidth="2" /></svg>
        </button>
        <svg viewBox="0 0 22 28" className="mr-[90px] ml-[34px] h-7 w-[22px]" aria-hidden="true">
          <ellipse cx="11" cy="16" rx="10.500" ry="10" fill="#111" />
          <ellipse cx="11" cy="9" rx="7.500" ry="9" fill="#000" />
          <ellipse cx="11" cy="20" rx="7" ry="7" fill="#fff" />
          <circle cx="8.500" cy="6" r="2" fill="#fff" />
          <circle cx="13.500" cy="6" r="2" fill="#fff" />
          <ellipse cx="11" cy="10.500" rx="5" ry="1.800" fill="#f5a800" />
          <path d="M2 12q9 4 18 0v4q-6 2-11 2v4H5v-5l-3-1z" fill="#e81c2b" />
          <ellipse cx="6" cy="26.500" rx="4" ry="1.500" fill="#f5a800" />
          <ellipse cx="16" cy="26.500" rx="4" ry="1.500" fill="#f5a800" />
        </svg>
        <span className={`mr-8 pb-1 text-[24px] ${CJK}`}>中</span>
        <svg viewBox="0 0 28 26" className="mr-3.5 h-[26px] w-7" fill="none" stroke="#fff" strokeWidth="2" aria-hidden="true">
          <path d="M1 9C8 0 20 0 27 9M5 14c5-6 13-6 18 0M9 18c3-4 7-4 10 0" />
          <circle cx="14" cy="22" r="2" fill="#fff" stroke="none" />
        </svg>
        <svg viewBox="0 0 28 22" className="mr-3.5 h-[22px] w-7" fill="none" stroke="#fff" strokeWidth="1.800" aria-hidden="true">
          <path d="M1 7h4l7-6v20l-7-6H1zM17 6l9 10M26 6l-9 10" />
        </svg>
        <svg viewBox="0 0 28 24" className="mr-7 h-6 w-7" fill="none" stroke="#fff" strokeWidth="2" aria-hidden="true">
          <path d="M10 5h12q3 0 3 3v11q0 3-3 3H5q-3 0-3-3v-5" />
          <path d="M9 8h12q1 0 1 1v9q0 1-1 1H5l1-5z" fill="#fff" stroke="none" />
          <path d="M26 10v6" strokeWidth="3" />
          <path d="M5 0L1 9h4l-2 6 7-9H6z" fill="#fff" stroke="none" />
        </svg>
        <div className="text-right font-['Noto_Sans',sans-serif] text-[20px] leading-7">
          <div>10:00</div>
          <div>2024-01-02</div>
        </div>
        <svg viewBox="0 0 24 28" className="ml-4 h-7 w-6" fill="none" stroke="#fff" strokeWidth="1.800" aria-hidden="true">
          <path d="M12 2c-5 0-8 4-8 8v6l-3 6h22l-3-6v-6c0-4-3-8-8-8zM9 23c0 4 6 4 6 0" />
        </svg>
      </div>
    </div>
  );
}

export default function App() {
  return (
    <div className="relative flex min-h-screen flex-col bg-[#ffffe1] text-black">
      <TitleBar />
      <MenuBar />
      <ToolBar />
      <TabStrip />
      <main className="flex flex-1 flex-col border-x-4 border-b-4 border-[#2d68d2]">
        <div className="h-[5px] bg-[#ffcb8b]" />
        <div className="flex flex-1 flex-col border-x-3 border-b-4 border-[#f0f0f0] border-l-[#8a8a8a]">
          <div className="border-t-2 border-[#777]">
            <FilterRow />
          </div>
          <div className="flex flex-1 border-t-[7px] border-white">
            <div className="flex min-w-0 flex-1 flex-col border-r-3 border-b-3 border-[#a0a0a0]">
              <InfoRow />
              <SurgeryTable />
              <div className="flex h-3.5 justify-center">
                <button aria-label="折叠" className="flex h-3.5 w-[806px] items-center gap-2 border-2 border-t-0 border-[#b8b8b8] bg-[#fffff4] px-2">
                  <svg viewBox="0 0 12 8" className="h-2 w-3"><path d="M1 1l5 5 5-5" fill="none" stroke="#000" strokeWidth="3" /></svg>
                  <span className="flex-1 border-t-2 border-dotted border-[#4b9be0]" />
                  <svg viewBox="0 0 12 8" className="h-2 w-3"><path d="M1 1l5 5 5-5" fill="none" stroke="#000" strokeWidth="3" /></svg>
                </button>
              </div>
              <div className="mt-0.5 flex">
                <button className={`ml-1.5 h-11 w-[110px] rounded-tl-lg border-2 border-b-0 border-t-[6px] border-[#b4b4b4] border-t-[#0078d7] pb-0.5 text-[22px] leading-8 ${SONG}`}>
                  手术排台
                </button>
                <div className="flex-1 border-b-2 border-[#b4b4b4]" />
              </div>
              <Form />
            </div>
            <SidePanel />
          </div>
        </div>
      </main>
      <StatusBar />
      <TaskBar />

      {/* highlight box over the last row number */}
      <div className="pointer-events-none absolute top-[911px] left-0 h-[68px] w-[65px] border-[6px] border-[#ff3a36]" />
      {/* floating level gauge on the right edge */}
      <div className="pointer-events-none absolute top-[103px] right-0.5 flex h-[88px] w-3.5 items-end justify-center rounded-full border-3 border-[#6b7280] pb-0.5">
        <div className="h-7 w-1.5 rounded-full bg-[#3d9bff]" />
      </div>
    </div>
  );
}
